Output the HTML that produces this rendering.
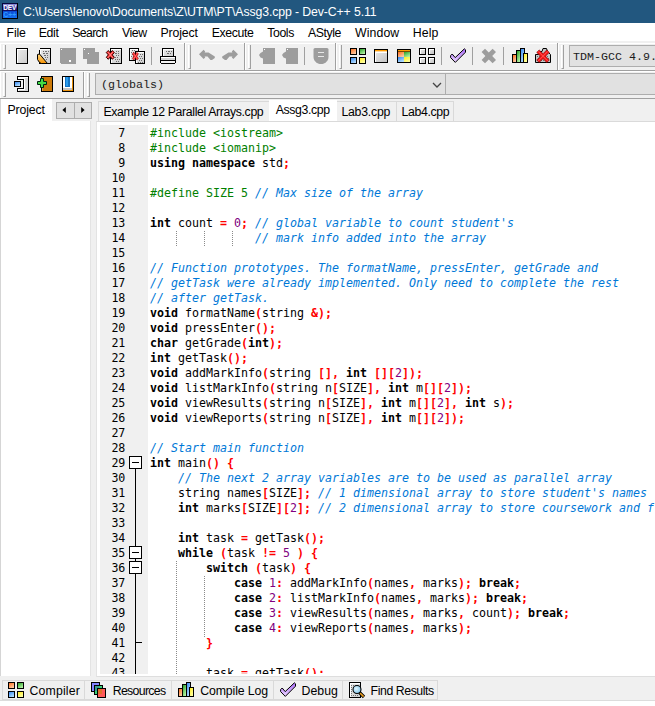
<!DOCTYPE html>
<html lang="en"><head><meta charset="utf-8"><title>Dev-C++ 5.11</title>
<style>
*{box-sizing:border-box;margin:0;padding:0}
html,body{width:655px;height:706px;overflow:hidden;background:#f0f0f0}
body{position:relative;font-family:"Liberation Sans",Arial,sans-serif;font-size:11.6px;color:#000}
.a{position:absolute}
#title{left:0;top:0;width:655px;height:23px;background:#22577f}
#title .t{left:23px;top:4px;color:#fff;font-size:12.3px;line-height:16px;white-space:nowrap}
#menu{left:0;top:23px;width:655px;height:18px;background:#fff}
#menu span{position:absolute;top:2px;line-height:16px;font-size:12.3px;white-space:nowrap;color:#000}
.hl{position:absolute;height:1px;left:0;width:655px}
.grip{position:absolute;width:3px;border-left:1px solid #fff;border-right:1px solid #a0a0a0;border-bottom:1px solid #a0a0a0}
.vsep{position:absolute;width:2px;border-left:1px solid #a0a0a0;border-right:1px solid #fff}
.sep{position:absolute;width:1px;background:#a0a0a0}
svg{position:absolute;overflow:visible}
.ic{shape-rendering:crispEdges}
.combo{position:absolute;background:#e1e1e1;border:1px solid #adadad;font-family:"Liberation Mono","Courier New",monospace;font-size:11.66px;color:#1b1b1b;white-space:nowrap;overflow:hidden}
.combo span{position:absolute;line-height:14px}
/* left panel */
#lp{left:0;top:99px;width:91px;height:577px;background:#fff;border-left:1px solid #d5d5d5;border-right:1px solid #e3e3e3}
#lptabs{left:52px;top:99px;width:40px;height:22px;background:#f0f0f0}
.sb{position:absolute;top:102px;height:17px;width:18px;background:#e1e1e1;border:1px solid #adadad}
.tabt{position:absolute;font-size:12.3px;line-height:16px;white-space:nowrap}
/* editor */
#ed{left:96px;top:121px;width:559px;height:556px;background:#fff;border-left:1px solid #e3e3e3;border-top:1px solid #dadada;border-bottom:1px solid #dedede}
#edin{left:97px;top:122px;width:558px;height:552px;overflow:hidden;background:#fff}
#gut{left:100px;top:125px;width:48px;height:549px;background:#f0f0f0}
.ln,.cl{position:absolute;font-family:"DejaVu Sans Mono","Liberation Mono",monospace;font-size:11.63px;line-height:15px;height:15px;white-space:pre;color:#000}
.ln{left:104px;width:21px;text-align:right;letter-spacing:-0.3px}
.cl{left:150px}
.k{font-weight:bold}
.s{font-weight:bold;color:#f00}
.n{color:#800080}
.c{color:#0078d7;font-style:italic}
.p{color:#008000}
.fold{position:absolute;left:129px;width:13px;height:13px;border:1px solid #000;background:#fff}
.fold i{position:absolute;left:2px;top:5px;width:7px;height:1px;background:#000}
.vl{position:absolute;width:1px;background:#000}
.ig{position:absolute;width:1px;background-image:linear-gradient(#8a8a8a 50%,transparent 50%);background-size:1px 2px}
.etab{position:absolute;top:101px;height:20px;background:#f0f0f0;border:1px solid #d9d9d9;border-bottom:none}
.btab{position:absolute;top:680px;height:20px;border-right:1px solid #d9d9d9}
#bstrip{left:2px;top:680px;width:436px;height:20px;background:#f0f0f0;border:1px solid #d9d9d9}
#bpage{left:0;top:700px;width:655px;height:6px;background:#fff;border-top:1px solid #dcdcdc}
</style></head>
<body>
<div id="title" class="a">
<svg style="left:2px;top:3px" width="16" height="16" viewBox="0 0 16 16"><defs><linearGradient id="dv1" x1="0" y1="0" x2="0" y2="1"><stop offset="0" stop-color="#9494dc"/><stop offset="0.55" stop-color="#2c2c98"/><stop offset="1" stop-color="#0c0c5c"/></linearGradient><linearGradient id="dv2" x1="0" y1="0" x2="0" y2="1"><stop offset="0" stop-color="#0c48d0"/><stop offset="1" stop-color="#1672f4"/></linearGradient></defs><rect width="16" height="16" fill="#06063c" shape-rendering="crispEdges"/><rect x="1" y="1" width="14" height="7" fill="url(#dv1)" shape-rendering="crispEdges"/><rect x="1" y="8" width="14" height="7" fill="url(#dv2)" shape-rendering="crispEdges"/><rect x="15" y="0" width="1" height="16" fill="#000" shape-rendering="crispEdges"/><rect x="0" y="15" width="16" height="1" fill="#000" shape-rendering="crispEdges"/><text x="7.8" y="7.3" font-family="Liberation Sans, sans-serif" font-size="6.4" font-weight="bold" fill="#fff" text-anchor="middle">DEV</text><text x="7.8" y="13.6" font-family="Liberation Sans, sans-serif" font-size="6.8" font-weight="bold" fill="#2e9cff" text-anchor="middle">C++</text></svg>
<div class="a t" style="left:22.90px;letter-spacing:-0.118px">C:\Users\lenovo\Documents\Z\UTM\PT\Assg3.cpp - Dev-C++ 5.11</div>
</div>
<div id="menu" class="a">
<span style="left:6.60px;letter-spacing:-0.182px">File</span><span style="left:38.68px;letter-spacing:-0.301px">Edit</span><span style="left:72.18px;letter-spacing:-0.631px">Search</span><span style="left:121.89px;letter-spacing:-0.356px">View</span><span style="left:160.42px;letter-spacing:-0.121px">Project</span><span style="left:211.68px;letter-spacing:-0.373px">Execute</span><span style="left:267.19px;letter-spacing:-0.383px">Tools</span><span style="left:307.98px;letter-spacing:-0.436px">AStyle</span><span style="left:354.95px;letter-spacing:0.114px">Window</span><span style="left:412.68px;letter-spacing:0.138px">Help</span>
</div>
<div class="hl" style="top:43px;background:#fff"></div>
<div class="a" style="left:0;top:43px;width:1px;height:27px;background:#fff"></div>
<div class="a" style="left:0;top:71px;width:1px;height:27px;background:#fff"></div>
<!-- toolbar row 1 -->
<div class="hl" style="top:70px;background:#a0a0a0"></div>
<div class="hl" style="top:71px;background:#fff"></div>
<div class="grip" style="left:3px;top:45px;height:24px"></div>
<div class="grip" style="left:188px;top:45px;height:24px"></div>
<div class="grip" style="left:248px;top:45px;height:24px"></div>
<div class="grip" style="left:339px;top:45px;height:24px"></div>
<div class="grip" style="left:561px;top:45px;height:24px"></div>
<div class="vsep" style="left:184px;top:43px;height:27px"></div>
<div class="vsep" style="left:244px;top:43px;height:27px"></div>
<div class="vsep" style="left:335px;top:43px;height:27px"></div>
<div class="vsep" style="left:557px;top:43px;height:27px"></div>
<div class="sep" style="left:151px;top:47px;height:18px"></div>
<div class="sep" style="left:304px;top:47px;height:18px"></div>
<div class="sep" style="left:441px;top:47px;height:18px"></div>
<div class="sep" style="left:472px;top:47px;height:18px"></div>
<div class="sep" style="left:503px;top:47px;height:18px"></div>
<svg width="0" height="0" style="position:absolute"><defs>
<linearGradient id="gpg" x1="0" y1="0" x2="1" y2="1"><stop offset="0" stop-color="#e8e8e8"/><stop offset="1" stop-color="#cecece"/></linearGradient>
<linearGradient id="gor" x1="0" y1="0" x2="0.6" y2="1"><stop offset="0" stop-color="#ff7020"/><stop offset="1" stop-color="#ffc8a0"/></linearGradient>
<linearGradient id="ggr" x1="0" y1="0" x2="0.6" y2="1"><stop offset="0" stop-color="#28a028"/><stop offset="1" stop-color="#b0f0a0"/></linearGradient>
<linearGradient id="gbl" x1="0" y1="0" x2="0.6" y2="1"><stop offset="0" stop-color="#3888f0"/><stop offset="1" stop-color="#b0dcff"/></linearGradient>
<linearGradient id="gye" x1="0" y1="0" x2="0.6" y2="1"><stop offset="0" stop-color="#ffec20"/><stop offset="1" stop-color="#ffffa0"/></linearGradient>
<linearGradient id="gtri" x1="0" y1="0" x2="0" y2="1"><stop offset="0" stop-color="#ffd880"/><stop offset="1" stop-color="#f59000"/></linearGradient>
<linearGradient id="gck" x1="0" y1="0" x2="0" y2="1"><stop offset="0" stop-color="#a868f8"/><stop offset="1" stop-color="#ecd8ff"/></linearGradient>
<radialGradient id="glens" cx="0.4" cy="0.4" r="0.7"><stop offset="0" stop-color="#e0f6ff"/><stop offset="1" stop-color="#78c0e8"/></radialGradient>
<linearGradient id="gpg2" x1="0" y1="0" x2="1" y2="1"><stop offset="0" stop-color="#e4e4e4"/><stop offset="1" stop-color="#c4c4c4"/></linearGradient>
</defs></svg><svg class="ic" style="left:14px;top:48px" width="16" height="16" viewBox="0 0 16 16"><rect x="2" y="0" width="12" height="16" fill="#000"/><rect x="3" y="1" width="10" height="14" fill="#fff"/><rect x="4" y="2" width="9" height="13" fill="url(#gpg)"/></svg><svg class="ic" style="left:37px;top:48px" width="16" height="16" viewBox="0 0 16 16"><rect x="2" y="0" width="12" height="16" fill="#000"/><rect x="3" y="1" width="10" height="14" fill="#fff"/><rect x="4" y="2" width="9" height="13" fill="url(#gpg)"/><rect x="6" y="3" width="1" height="1" fill="#6e6e6e"/><rect x="8" y="3" width="1" height="1" fill="#6e6e6e"/><rect x="9" y="3" width="1" height="1" fill="#6e6e6e"/><rect x="11" y="3" width="1" height="1" fill="#6e6e6e"/><rect x="6" y="5" width="1" height="1" fill="#6e6e6e"/><rect x="7" y="5" width="1" height="1" fill="#6e6e6e"/><rect x="9" y="5" width="1" height="1" fill="#6e6e6e"/><rect x="10" y="5" width="1" height="1" fill="#6e6e6e"/><rect x="7" y="7" width="1" height="1" fill="#6e6e6e"/><rect x="8" y="7" width="1" height="1" fill="#6e6e6e"/><rect x="10" y="7" width="1" height="1" fill="#6e6e6e"/><rect x="8" y="9" width="1" height="1" fill="#6e6e6e"/><rect x="10" y="9" width="1" height="1" fill="#6e6e6e"/><rect x="9" y="11" width="1" height="1" fill="#6e6e6e"/><path d="M0.5 6.5 L2.5 6 L10.5 15.5 L4.5 15.5 L2.5 14.5 L0.5 11.5Z" fill="url(#gtri)" stroke="#000" stroke-width="1" shape-rendering="auto"/><rect x="2" y="0" width="1" height="2" fill="#f0f0f0"/></svg><svg class="ic" style="left:60px;top:48px" width="16" height="16" viewBox="0 0 16 16"><rect x="0" y="0" width="16" height="16" fill="#9d9d9d"/><rect x="1" y="1" width="1" height="1" fill="#fff"/><rect x="9" y="12" width="2" height="2" fill="#fff"/><rect x="0" y="15" width="1" height="1" fill="#f0f0f0"/></svg><svg class="ic" style="left:83px;top:48px" width="16" height="16" viewBox="0 0 16 16"><rect x="0" y="0" width="12" height="11" fill="#9d9d9d"/><rect x="4" y="4" width="12" height="12" fill="#9d9d9d"/><rect x="1" y="1" width="1" height="1" fill="#fff"/><rect x="5" y="5" width="1" height="1" fill="#fff"/></svg><svg class="ic" style="left:106px;top:48px" width="16" height="16" viewBox="0 0 16 16"><rect x="4" y="0" width="12" height="16" fill="#000"/><rect x="5" y="1" width="10" height="14" fill="#fff"/><rect x="6" y="2" width="9" height="13" fill="url(#gpg)"/><rect x="10" y="3" width="1" height="1" fill="#6e6e6e"/><rect x="12" y="3" width="1" height="1" fill="#6e6e6e"/><rect x="9" y="5" width="1" height="1" fill="#6e6e6e"/><rect x="10" y="5" width="1" height="1" fill="#6e6e6e"/><rect x="12" y="5" width="1" height="1" fill="#6e6e6e"/><rect x="10" y="7" width="1" height="1" fill="#6e6e6e"/><rect x="12" y="7" width="1" height="1" fill="#6e6e6e"/><rect x="9" y="9" width="1" height="1" fill="#6e6e6e"/><rect x="11" y="9" width="1" height="1" fill="#6e6e6e"/><rect x="9" y="11" width="1" height="1" fill="#6e6e6e"/><rect x="11" y="11" width="1" height="1" fill="#6e6e6e"/><rect x="13" y="11" width="1" height="1" fill="#6e6e6e"/><rect x="10" y="13" width="1" height="1" fill="#6e6e6e"/><rect x="12" y="13" width="1" height="1" fill="#6e6e6e"/><polygon points="2.30,2.50 4.30,4.90 6.30,2.50 8.30,4.50 6.30,6.90 8.30,9.30 6.30,11.30 4.30,8.90 2.30,11.30 0.30,9.30 2.30,6.90 0.30,4.50" fill="#ff2a2a" stroke="#300000" stroke-width="1" stroke-linejoin="round" shape-rendering="auto"/><path d="M1.90 4.10 L6.70 9.70 M6.70 4.10 L1.90 9.70" stroke="#ff9a9a" stroke-width="0.9" stroke-linecap="round" fill="none" shape-rendering="auto"/></svg><svg class="ic" style="left:129px;top:48px" width="16" height="16" viewBox="0 0 16 16"><rect x="0" y="0" width="10" height="13" fill="#000"/><rect x="1" y="1" width="8" height="11" fill="#fff"/><rect x="2" y="2" width="7" height="10" fill="url(#gpg)"/><rect x="3" y="2" width="1" height="1" fill="#6e6e6e"/><rect x="5" y="2" width="1" height="1" fill="#6e6e6e"/><rect x="2" y="4" width="1" height="1" fill="#6e6e6e"/><rect x="4" y="4" width="1" height="1" fill="#6e6e6e"/><rect x="3" y="6" width="1" height="1" fill="#6e6e6e"/><rect x="2" y="8" width="1" height="1" fill="#6e6e6e"/><rect x="4" y="8" width="1" height="1" fill="#6e6e6e"/><rect x="6" y="3" width="10" height="13" fill="#000"/><rect x="7" y="4" width="8" height="11" fill="#fff"/><rect x="8" y="5" width="7" height="10" fill="url(#gpg)"/><rect x="11" y="6" width="1" height="1" fill="#6e6e6e"/><rect x="13" y="6" width="1" height="1" fill="#6e6e6e"/><rect x="10" y="8" width="1" height="1" fill="#6e6e6e"/><rect x="12" y="8" width="1" height="1" fill="#6e6e6e"/><rect x="11" y="10" width="1" height="1" fill="#6e6e6e"/><rect x="13" y="10" width="1" height="1" fill="#6e6e6e"/><rect x="10" y="12" width="1" height="1" fill="#6e6e6e"/><rect x="12" y="12" width="1" height="1" fill="#6e6e6e"/><rect x="9" y="14" width="1" height="1" fill="#6e6e6e"/><rect x="11" y="14" width="1" height="1" fill="#6e6e6e"/><rect x="13" y="14" width="1" height="1" fill="#6e6e6e"/><polygon points="4.90,4.30 6.40,6.70 7.90,4.30 9.40,5.80 7.90,8.20 9.40,10.60 7.90,12.10 6.40,9.70 4.90,12.10 3.40,10.60 4.90,8.20 3.40,5.80" fill="#ff1c1c" stroke="#900000" stroke-width="0.5" stroke-linejoin="round" shape-rendering="auto"/><path d="M4.75 5.65 L8.05 10.75 M8.05 5.65 L4.75 10.75" stroke="#ff7070" stroke-width="0.9" stroke-linecap="round" fill="none" shape-rendering="auto"/></svg><svg class="ic" style="left:160px;top:48px" width="16" height="16" viewBox="0 0 16 16"><rect x="2" y="0" width="12" height="9" fill="#000"/><rect x="3" y="1" width="10" height="7" fill="#fff"/><rect x="4" y="2" width="9" height="6" fill="url(#gpg)"/><rect x="6" y="3" width="1" height="1" fill="#6e6e6e"/><rect x="8" y="3" width="1" height="1" fill="#6e6e6e"/><rect x="9" y="3" width="1" height="1" fill="#6e6e6e"/><rect x="11" y="3" width="1" height="1" fill="#6e6e6e"/><rect x="7" y="5" width="1" height="1" fill="#6e6e6e"/><rect x="8" y="5" width="1" height="1" fill="#6e6e6e"/><rect x="10" y="5" width="1" height="1" fill="#6e6e6e"/><rect x="0" y="8" width="16" height="8" fill="#000"/><rect x="1" y="9" width="14" height="1" fill="#fff"/><rect x="1" y="10" width="14" height="2" fill="#d4d4d4"/><rect x="1" y="13" width="14" height="2" fill="#f4f4f4"/><rect x="0" y="15" width="1" height="1" fill="#f0f0f0"/><rect x="15" y="15" width="1" height="1" fill="#f0f0f0"/></svg><svg class="ic" style="left:199px;top:48px" width="16" height="16" viewBox="0 0 16 16"><path d="M0 6.3 L4.6 1.8 L6.2 3.4 L5.6 4.4 L9.5 4.4 L15.8 8.6 L15.8 10 L13 12 L11.5 12 L8.5 8.6 L5.6 8.6 L6.2 9.4 L4.6 11Z" fill="#9d9d9d" shape-rendering="auto"/></svg><svg class="ic" style="left:222px;top:48px" width="16" height="16" viewBox="0 0 16 16"><g transform="translate(16,0) scale(-1,1)"><path d="M0 6.3 L4.6 1.8 L6.2 3.4 L5.6 4.4 L9.5 4.4 L15.8 8.6 L15.8 10 L13 12 L11.5 12 L8.5 8.6 L5.6 8.6 L6.2 9.4 L4.6 11Z" fill="#9d9d9d" shape-rendering="auto"/></g></svg><svg class="ic" style="left:259px;top:48px" width="16" height="16" viewBox="0 0 16 16"><rect x="4" y="0" width="12" height="16" fill="#9d9d9d"/><path d="M4 3.5 L1.5 5 L0 7 L1.5 9.5 L4 10.5Z" fill="#9d9d9d" shape-rendering="auto"/><rect x="5" y="1" width="1" height="1" fill="#fff"/></svg><svg class="ic" style="left:282px;top:48px" width="16" height="16" viewBox="0 0 16 16"><rect x="4" y="0" width="12" height="16" fill="#9d9d9d"/><path d="M4 3.5 L1.5 5 L0 7 L1.5 9.5 L4 10.5Z" fill="#9d9d9d" shape-rendering="auto"/><rect x="5" y="1" width="1" height="1" fill="#fff"/></svg><svg class="ic" style="left:313px;top:48px" width="16" height="16" viewBox="0 0 16 16"><path d="M0.5 1.5 Q0.5 0 2 0 L14 0 Q15.5 0 15.5 1.5 L15.5 9 Q15.5 13 11 15.5 Q8 16.5 5 15.5 Q0.5 13 0.5 9Z" fill="#9d9d9d" shape-rendering="auto"/><rect x="5" y="4" width="6" height="1.4" fill="#e8e8e8"/><rect x="5" y="8" width="6" height="1.4" fill="#e8e8e8"/></svg><svg class="ic" style="left:350px;top:48px" width="16" height="16" viewBox="0 0 16 16"><rect x="0" y="0" width="7" height="7" fill="#000"/><rect x="1" y="1" width="5" height="5" fill="url(#gor)"/><rect x="9" y="0" width="7" height="7" fill="#000"/><rect x="10" y="1" width="5" height="5" fill="url(#ggr)"/><rect x="0" y="9" width="7" height="7" fill="#000"/><rect x="1" y="10" width="5" height="5" fill="url(#gbl)"/><rect x="9" y="9" width="7" height="7" fill="#000"/><rect x="10" y="10" width="5" height="5" fill="url(#gye)"/></svg><svg class="ic" style="left:373px;top:48px" width="16" height="16" viewBox="0 0 16 16"><rect x="1" y="1" width="14" height="14" fill="#000"/><rect x="2" y="2" width="12" height="1" fill="#ff9c00"/><rect x="2" y="3" width="12" height="1" fill="#ffd9a0"/><rect x="2" y="4" width="12" height="10" fill="#fff"/><rect x="3" y="5" width="11" height="9" fill="url(#gpg2)"/></svg><svg class="ic" style="left:396px;top:48px" width="16" height="16" viewBox="0 0 16 16"><rect x="1" y="1" width="14" height="14" fill="#000"/><rect x="2" y="2" width="12" height="1" fill="#ff9c00"/><rect x="2" y="3" width="12" height="1" fill="#7a4a00"/><rect x="2" y="4" width="6" height="5" fill="url(#gor)"/><rect x="8" y="4" width="6" height="5" fill="url(#ggr)"/><rect x="2" y="9" width="6" height="5" fill="url(#gbl)"/><rect x="8" y="9" width="6" height="5" fill="url(#gye)"/></svg><svg class="ic" style="left:419px;top:48px" width="16" height="16" viewBox="0 0 16 16"><rect x="0" y="0" width="7" height="7" fill="#000"/><rect x="1" y="1" width="5" height="5" fill="#fff"/><rect x="2" y="2" width="4" height="4" fill="url(#gpg2)"/><rect x="9" y="0" width="7" height="7" fill="#000"/><rect x="10" y="1" width="5" height="5" fill="#fff"/><rect x="11" y="2" width="4" height="4" fill="url(#gpg2)"/><rect x="0" y="9" width="7" height="7" fill="#000"/><rect x="1" y="10" width="5" height="5" fill="#fff"/><rect x="2" y="11" width="4" height="4" fill="url(#gpg2)"/><rect x="9" y="9" width="7" height="7" fill="#000"/><rect x="10" y="10" width="5" height="5" fill="#fff"/><rect x="11" y="11" width="4" height="4" fill="url(#gpg2)"/></svg><svg class="ic" style="left:450px;top:48px" width="16" height="16" viewBox="0 0 16 16"><path d="M0.6 7.6 L2.2 6 L5.2 9.6 L14.4 0.8 L15.5 1.8 L15.5 4.2 L5.3 14.4 L0.6 9.6Z" fill="url(#gck)" stroke="#000" stroke-width="1" stroke-linejoin="round" shape-rendering="auto"/></svg><svg class="ic" style="left:481px;top:48px" width="16" height="16" viewBox="0 0 16 16"><path d="M0.6 4 L4 0.7 L7.8 4.4 L11.6 0.7 L15 4 L11.2 8 L15 12 L11.6 15.3 L7.8 11.6 L4 15.3 L0.6 12 L4.4 8Z" fill="#9d9d9d" shape-rendering="auto"/></svg><svg class="ic" style="left:512px;top:48px" width="16" height="16" viewBox="0 0 16 16"><rect x="0" y="6" width="5" height="9" fill="#000"/><rect x="1" y="7" width="3" height="7" fill="url(#gor)"/><rect x="4" y="2" width="5" height="13" fill="#000"/><rect x="5" y="3" width="3" height="11" fill="url(#ggr)"/><rect x="8" y="0" width="5" height="15" fill="#000"/><rect x="9" y="1" width="3" height="13" fill="url(#gbl)"/><rect x="11" y="5" width="5" height="10" fill="#000"/><rect x="12" y="6" width="3" height="8" fill="url(#gye)"/></svg><svg class="ic" style="left:535px;top:48px" width="16" height="16" viewBox="0 0 16 16"><path d="M0.5 14.5 L0.5 6.5 L3.5 6.5 L3.5 3.5 L7 3.5 L8 0.5 L11.5 0.5 L12.5 3.5 L15.5 6.5 L15.5 14.5Z" fill="#c8c8c8" stroke="#000" stroke-width="1" shape-rendering="auto"/><rect x="2" y="8" width="1" height="1" fill="#6e6e6e"/><rect x="4" y="8" width="1" height="1" fill="#6e6e6e"/><rect x="6" y="8" width="1" height="1" fill="#6e6e6e"/><rect x="8" y="8" width="1" height="1" fill="#6e6e6e"/><rect x="10" y="8" width="1" height="1" fill="#6e6e6e"/><rect x="12" y="8" width="1" height="1" fill="#6e6e6e"/><rect x="3" y="10" width="1" height="1" fill="#6e6e6e"/><rect x="5" y="10" width="1" height="1" fill="#6e6e6e"/><rect x="7" y="10" width="1" height="1" fill="#6e6e6e"/><rect x="9" y="10" width="1" height="1" fill="#6e6e6e"/><rect x="11" y="10" width="1" height="1" fill="#6e6e6e"/><rect x="13" y="10" width="1" height="1" fill="#6e6e6e"/><rect x="2" y="12" width="1" height="1" fill="#6e6e6e"/><rect x="4" y="12" width="1" height="1" fill="#6e6e6e"/><rect x="6" y="12" width="1" height="1" fill="#6e6e6e"/><rect x="8" y="12" width="1" height="1" fill="#6e6e6e"/><rect x="10" y="12" width="1" height="1" fill="#6e6e6e"/><rect x="12" y="12" width="1" height="1" fill="#6e6e6e"/><polygon points="4.20,1.90 8.00,5.70 11.80,1.90 14.30,4.40 10.50,8.20 14.30,12.00 11.80,14.50 8.00,10.70 4.20,14.50 1.70,12.00 5.50,8.20 1.70,4.40" fill="#f61414" stroke="#700000" stroke-width="0.6" stroke-linejoin="round" shape-rendering="auto"/><path d="M3.55 3.75 L12.45 12.65 M12.45 3.75 L3.55 12.65" stroke="#ff5a5a" stroke-width="0.9" stroke-linecap="round" fill="none" shape-rendering="auto"/></svg>
<div class="combo" style="left:569px;top:45px;width:100px;height:22px"><span style="left:3px;top:4px">TDM-GCC 4.9.</span></div>
<!-- toolbar row 2 -->
<div class="hl" style="top:98px;background:#a0a0a0"></div>
<div class="grip" style="left:3px;top:73px;height:24px"></div>
<div class="grip" style="left:87px;top:73px;height:24px"></div>
<div class="vsep" style="left:83px;top:72px;height:26px"></div>
<svg class="ic" style="left:14px;top:76px" width="16" height="16" viewBox="0 0 16 16"><path d="M3 0 H15 V16 H3 V12 H9 V4 H3Z" fill="#000"/><path d="M4 1 H14 V15 H4 V13 H10 V3 H4Z" fill="#fff"/><path d="M11 2 H14 V15 H5 V14 H11Z" fill="#d8d8d8"/><rect x="0" y="5" width="7" height="6" fill="#000"/><rect x="1" y="6" width="5" height="4" fill="url(#gbl)"/></svg><svg class="ic" style="left:37px;top:76px" width="16" height="16" viewBox="0 0 16 16"><rect x="4" y="0" width="12" height="16" fill="#000"/><rect x="5" y="1" width="10" height="14" fill="#cc7a0a"/><rect x="5" y="1" width="1" height="14" fill="#e8a040"/><path d="M0.5 5.5 H3.5 V2.5 H6.5 V5.5 H9.5 V8.5 H6.5 V11.5 H3.5 V8.5 H0.5Z" fill="#44dc44" stroke="#021" stroke-width="1" shape-rendering="auto"/></svg><svg class="ic" style="left:60px;top:76px" width="16" height="16" viewBox="0 0 16 16"><rect x="2" y="0" width="12" height="16" fill="#000"/><rect x="3" y="1" width="10" height="14" fill="#e8900c"/><rect x="3" y="1" width="9" height="11" fill="#fff"/><rect x="3" y="12" width="9" height="2" fill="#c4c4c4"/><rect x="5" y="1" width="5" height="10" fill="#1474c4"/><rect x="6" y="1" width="2" height="9" fill="#2c9cec"/></svg>
<div class="combo" style="left:95px;top:73px;width:351px;height:22px"><span style="left:5px;top:4px">(globals)</span>
<svg style="left:336px;top:8px" width="10" height="7" viewBox="0 0 10 7"><path d="M1 1 L5 5 L9 1" fill="none" stroke="#444" stroke-width="1.3"/></svg></div>
<div class="combo" style="left:445px;top:73px;width:230px;height:22px"></div>
<!-- left panel -->
<div id="lp" class="a"></div>
<div id="lptabs" class="a"></div>
<div class="tabt" style="top:102px;left:7.42px;letter-spacing:-0.121px">Project</div>
<div class="sb" style="left:56px;width:19px"><svg style="left:5px;top:4px" width="4" height="6" viewBox="0 0 4 6"><path d="M3.8 0 L3.8 6 L0.4 3Z" fill="#000"/></svg></div>
<div class="sb" style="left:74px"><svg style="left:6px;top:4px" width="4" height="6" viewBox="0 0 4 6"><path d="M0.2 0 L0.2 6 L3.6 3Z" fill="#000"/></svg></div>
<!-- editor tabs -->
<div class="etab" style="left:98px;width:172px"></div>
<div class="etab" style="left:335px;width:62px"></div>
<div class="etab" style="left:396px;width:58px"></div>
<div class="a" style="left:269px;top:100px;width:68px;height:22px;background:#fff"></div>
<div class="tabt" style="top:104px;left:103.42px;letter-spacing:-0.365px">Example 12 Parallel Arrays.cpp</div>
<div class="tabt" style="top:102px;left:275.83px;letter-spacing:-0.407px">Assg3.cpp</div>
<div class="tabt" style="top:104px;left:341.42px;letter-spacing:-0.234px">Lab3.cpp</div>
<div class="tabt" style="top:104px;left:401.60px;letter-spacing:-0.374px">Lab4.cpp</div>
<!-- editor -->
<div id="ed" class="a"></div>
<div id="gut" class="a"></div>
<div id="edin" class="a"><div class="a" style="left:-97px;top:-122px;width:900px;height:706px">
<div class="a" style="left:100px;top:125px;width:48px;height:560px;background:#f0f0f0"></div>
<div class="vl" style="left:135px;top:468px;height:220px"></div>
<div class="fold" style="top:456px"><i></i></div>
<div class="fold" style="top:546px"><i></i></div>
<div class="fold" style="top:561px"><i></i></div>
<div class="a" style="left:136px;top:642px;width:6px;height:1px;background:#000"></div>
<div class="ig" style="left:176px;top:231px;height:15px"></div>
<div class="ig" style="left:204px;top:231px;height:15px"></div>
<div class="ig" style="left:232px;top:231px;height:15px"></div>
<div class="ig" style="left:176px;top:561px;height:130px"></div>
<div class="ig" style="left:204px;top:576px;height:61px"></div>
<div class="ln" style="top:126px">7</div>
<div class="cl" style="top:126px"><span class="p">#include &lt;iostream&gt;</span></div>
<div class="ln" style="top:141px">8</div>
<div class="cl" style="top:141px"><span class="p">#include &lt;iomanip&gt;</span></div>
<div class="ln" style="top:156px">9</div>
<div class="cl" style="top:156px"><span class="k">using namespace</span> std<span class="s">;</span></div>
<div class="ln" style="top:171px">10</div>
<div class="ln" style="top:186px">11</div>
<div class="cl" style="top:186px"><span class="p">#define SIZE 5 </span><span class="c">// Max size of the array</span></div>
<div class="ln" style="top:201px">12</div>
<div class="ln" style="top:216px">13</div>
<div class="cl" style="top:216px"><span class="k">int</span> count <span class="s">=</span> <span class="n">0</span><span class="s">;</span> <span class="c">// global variable to count student's</span></div>
<div class="ln" style="top:231px">14</div>
<div class="cl" style="top:231px">               <span class="c">// mark info added into the array</span></div>
<div class="ln" style="top:246px">15</div>
<div class="ln" style="top:261px">16</div>
<div class="cl" style="top:261px"><span class="c">// Function prototypes. The formatName, pressEnter, getGrade and</span></div>
<div class="ln" style="top:276px">17</div>
<div class="cl" style="top:276px"><span class="c">// getTask were already implemented. Only need to complete the rest</span></div>
<div class="ln" style="top:291px">18</div>
<div class="cl" style="top:291px"><span class="c">// after getTask.</span></div>
<div class="ln" style="top:306px">19</div>
<div class="cl" style="top:306px"><span class="k">void</span> formatName<span class="s">(</span>string <span class="s">&amp;);</span></div>
<div class="ln" style="top:321px">20</div>
<div class="cl" style="top:321px"><span class="k">void</span> pressEnter<span class="s">();</span></div>
<div class="ln" style="top:336px">21</div>
<div class="cl" style="top:336px"><span class="k">char</span> getGrade<span class="s">(</span><span class="k">int</span><span class="s">);</span></div>
<div class="ln" style="top:351px">22</div>
<div class="cl" style="top:351px"><span class="k">int</span> getTask<span class="s">();</span></div>
<div class="ln" style="top:366px">23</div>
<div class="cl" style="top:366px"><span class="k">void</span> addMarkInfo<span class="s">(</span>string <span class="s">[],</span> <span class="k">int</span> <span class="s">[][</span><span class="n">2</span><span class="s">]);</span></div>
<div class="ln" style="top:381px">24</div>
<div class="cl" style="top:381px"><span class="k">void</span> listMarkInfo<span class="s">(</span>string n<span class="s">[</span>SIZE<span class="s">],</span> <span class="k">int</span> m<span class="s">[][</span><span class="n">2</span><span class="s">]);</span></div>
<div class="ln" style="top:396px">25</div>
<div class="cl" style="top:396px"><span class="k">void</span> viewResults<span class="s">(</span>string n<span class="s">[</span>SIZE<span class="s">],</span> <span class="k">int</span> m<span class="s">[][</span><span class="n">2</span><span class="s">],</span> <span class="k">int</span> s<span class="s">);</span></div>
<div class="ln" style="top:411px">26</div>
<div class="cl" style="top:411px"><span class="k">void</span> viewReports<span class="s">(</span>string n<span class="s">[</span>SIZE<span class="s">],</span> <span class="k">int</span> m<span class="s">[][</span><span class="n">2</span><span class="s">]);</span></div>
<div class="ln" style="top:426px">27</div>
<div class="ln" style="top:441px">28</div>
<div class="cl" style="top:441px"><span class="c">// Start main function</span></div>
<div class="ln" style="top:456px">29</div>
<div class="cl" style="top:456px"><span class="k">int</span> main<span class="s">()</span> <span class="s">{</span></div>
<div class="ln" style="top:471px">30</div>
<div class="cl" style="top:471px">    <span class="c">// The next 2 array variables are to be used as parallel array</span></div>
<div class="ln" style="top:486px">31</div>
<div class="cl" style="top:486px">    string names<span class="s">[</span>SIZE<span class="s">];</span> <span class="c">// 1 dimensional array to store student's names</span></div>
<div class="ln" style="top:501px">32</div>
<div class="cl" style="top:501px">    <span class="k">int</span> marks<span class="s">[</span>SIZE<span class="s">][</span><span class="n">2</span><span class="s">];</span> <span class="c">// 2 dimensional array to store coursework and f</span></div>
<div class="ln" style="top:516px">33</div>
<div class="ln" style="top:531px">34</div>
<div class="cl" style="top:531px">    <span class="k">int</span> task <span class="s">=</span> getTask<span class="s">();</span></div>
<div class="ln" style="top:546px">35</div>
<div class="cl" style="top:546px">    <span class="k">while</span> <span class="s">(</span>task <span class="s">!=</span> <span class="n">5</span> <span class="s">)</span> <span class="s">{</span></div>
<div class="ln" style="top:561px">36</div>
<div class="cl" style="top:561px">        <span class="k">switch</span> <span class="s">(</span>task<span class="s">)</span> <span class="s">{</span></div>
<div class="ln" style="top:576px">37</div>
<div class="cl" style="top:576px">            <span class="k">case</span> <span class="n">1</span><span class="s">:</span> addMarkInfo<span class="s">(</span>names<span class="s">,</span> marks<span class="s">);</span> <span class="k">break</span><span class="s">;</span></div>
<div class="ln" style="top:591px">38</div>
<div class="cl" style="top:591px">            <span class="k">case</span> <span class="n">2</span><span class="s">:</span> listMarkInfo<span class="s">(</span>names<span class="s">,</span> marks<span class="s">);</span> <span class="k">break</span><span class="s">;</span></div>
<div class="ln" style="top:606px">39</div>
<div class="cl" style="top:606px">            <span class="k">case</span> <span class="n">3</span><span class="s">:</span> viewResults<span class="s">(</span>names<span class="s">,</span> marks<span class="s">,</span> count<span class="s">);</span> <span class="k">break</span><span class="s">;</span></div>
<div class="ln" style="top:621px">40</div>
<div class="cl" style="top:621px">            <span class="k">case</span> <span class="n">4</span><span class="s">:</span> viewReports<span class="s">(</span>names<span class="s">,</span> marks<span class="s">);</span></div>
<div class="ln" style="top:636px">41</div>
<div class="cl" style="top:636px">        <span class="s">}</span></div>
<div class="ln" style="top:651px">42</div>
<div class="ln" style="top:666px">43</div>
<div class="cl" style="top:666px">        task <span class="s">=</span> getTask<span class="s">();</span></div>
</div></div>
<!-- bottom tabs -->
<div id="bstrip" class="a"></div>
<div class="btab" style="left:2px;width:83px"></div>
<div class="btab" style="left:85px;width:87px"></div>
<div class="btab" style="left:172px;width:102px"></div>
<div class="btab" style="left:274px;width:69px"></div>
<div class="tabt" style="top:683px;left:29.60px;letter-spacing:0.136px">Compiler</div>
<div class="tabt" style="top:683px;left:112.68px;letter-spacing:-0.666px">Resources</div>
<div class="tabt" style="top:683px;left:200.22px;letter-spacing:-0.110px">Compile Log</div>
<div class="tabt" style="top:683px;left:301.51px;letter-spacing:0.026px">Debug</div>
<div class="tabt" style="top:683px;left:370.60px;letter-spacing:-0.429px">Find Results</div>
<svg class="ic" style="left:8px;top:682px" width="16" height="16" viewBox="0 0 16 16"><rect x="0" y="0" width="7" height="7" fill="#000"/><rect x="1" y="1" width="5" height="5" fill="url(#gor)"/><rect x="9" y="0" width="7" height="7" fill="#000"/><rect x="10" y="1" width="5" height="5" fill="url(#ggr)"/><rect x="0" y="9" width="7" height="7" fill="#000"/><rect x="1" y="10" width="5" height="5" fill="url(#gbl)"/><rect x="9" y="9" width="7" height="7" fill="#000"/><rect x="10" y="10" width="5" height="5" fill="url(#gye)"/></svg><svg class="ic" style="left:91px;top:682px" width="16" height="16" viewBox="0 0 16 16"><rect x="0" y="0" width="9" height="10" fill="#000"/><rect x="1" y="1" width="7" height="8" fill="#8484ff"/><rect x="3" y="3" width="9" height="10" fill="#000"/><rect x="4" y="4" width="7" height="8" fill="#38d078"/><rect x="4" y="4" width="4" height="5" fill="#3a9a90"/><rect x="6" y="6" width="9" height="10" fill="#000"/><rect x="7" y="7" width="7" height="8" fill="#ff5a5a"/><rect x="7" y="7" width="4" height="5" fill="#e0702c"/></svg><svg class="ic" style="left:178px;top:682px" width="16" height="16" viewBox="0 0 16 16"><rect x="0" y="6" width="5" height="9" fill="#000"/><rect x="1" y="7" width="3" height="7" fill="url(#gor)"/><rect x="4" y="2" width="5" height="13" fill="#000"/><rect x="5" y="3" width="3" height="11" fill="url(#ggr)"/><rect x="8" y="0" width="5" height="15" fill="#000"/><rect x="9" y="1" width="3" height="13" fill="url(#gbl)"/><rect x="11" y="5" width="5" height="10" fill="#000"/><rect x="12" y="6" width="3" height="8" fill="url(#gye)"/></svg><svg class="ic" style="left:280px;top:682px" width="16" height="16" viewBox="0 0 16 16"><path d="M0.6 7.6 L2.2 6 L5.2 9.6 L14.4 0.8 L15.5 1.8 L15.5 4.2 L5.3 14.4 L0.6 9.6Z" fill="url(#gck)" stroke="#000" stroke-width="1" stroke-linejoin="round" shape-rendering="auto"/></svg><svg class="ic" style="left:349px;top:682px" width="16" height="16" viewBox="0 0 16 16"><rect x="0" y="0" width="12" height="16" fill="#000"/><rect x="1" y="1" width="10" height="14" fill="#fff"/><rect x="2" y="2" width="9" height="13" fill="url(#gpg)"/><rect x="2" y="3" width="1" height="1" fill="#6e6e6e"/><rect x="4" y="3" width="1" height="1" fill="#6e6e6e"/><rect x="6" y="3" width="1" height="1" fill="#6e6e6e"/><rect x="8" y="3" width="1" height="1" fill="#6e6e6e"/><rect x="2" y="5" width="1" height="1" fill="#6e6e6e"/><rect x="2" y="7" width="1" height="1" fill="#6e6e6e"/><rect x="2" y="9" width="1" height="1" fill="#6e6e6e"/><rect x="2" y="11" width="1" height="1" fill="#6e6e6e"/><rect x="2" y="13" width="1" height="1" fill="#6e6e6e"/><rect x="4" y="13" width="1" height="1" fill="#6e6e6e"/><rect x="6" y="13" width="1" height="1" fill="#6e6e6e"/><rect x="8" y="13" width="1" height="1" fill="#6e6e6e"/><path d="M10.5 10.5 L15 15" stroke="#000" stroke-width="3.2" shape-rendering="auto"/><path d="M11 11 L14.6 14.6" stroke="#f0a020" stroke-width="1.6" shape-rendering="auto"/><circle cx="8" cy="7.5" r="4" fill="url(#glens)" stroke="#000" stroke-width="1.1" shape-rendering="auto"/></svg>
<div id="bpage" class="a"></div>

</body></html>
